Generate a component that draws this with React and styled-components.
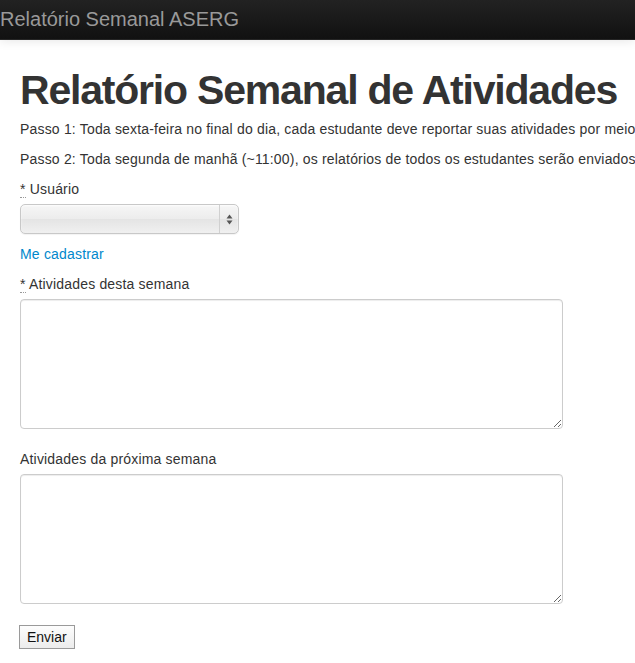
import styled, { createGlobalStyle } from "styled-components";

const GlobalStyle = createGlobalStyle`
  html, body {
    margin: 0;
    padding: 0;
    overflow-x: hidden;
    background: #fff;
  }
  body {
    font-family: "Liberation Sans", Arial, sans-serif;
    font-size: 14px;
    line-height: 20px;
    color: #333;
    letter-spacing: 0.18px;
  }
`

const Navbar = styled.div`
  height: 40px;
  background: linear-gradient(to bottom, #222, #111);
  border-bottom: 1px solid #252525;
  box-shadow: 0 1px 10px rgba(0, 0, 0, 0.1);
  box-sizing: border-box;
  overflow: hidden;
  white-space: nowrap;
`

const Brand = styled.a`
  display: block;
  padding: 9px 0 0 0;
  font-size: 20px;
  line-height: 20px;
  font-weight: 200;
  letter-spacing: 0;
  color: #999;
  text-decoration: none;
`

const Container = styled.div`
  width: 940px;
  padding: 0 20px;
`

const Title = styled.h1`
  margin: 28px 0 7px;
  font-size: 41px;
  line-height: 44px;
  font-weight: bold;
  color: #333;
  letter-spacing: -1.2px;
  white-space: nowrap;
`

const Step = styled.p`
  margin: 0 0 10px;
  white-space: nowrap;
`

const Form = styled.form`
  display: flex;
  flex-direction: column;
  align-items: flex-start;
  margin-top: 8px;
`

const Label = styled.label`
  display: block;
  margin-bottom: 5px;
`

const Required = styled.abbr`
  text-decoration: none;
  border-bottom: 1px dotted #999;
  cursor: help;
`

const SelectWrap = styled.div`
  position: relative;
  width: 219px;
  height: 30px;
  margin-bottom: 10px;
`

const Select = styled.select`
  appearance: none;
  width: 100%;
  height: 100%;
  border: 1px solid #c8c8c8;
  border-radius: 5px;
  background: linear-gradient(to bottom, #f6f6f6 0%, #ececec 50%, #e4e4e4 51%, #f0f0f0 100%);
  box-shadow: inset 0 1px 2px rgba(255, 255, 255, 0.8), 0 1px 1px rgba(0, 0, 0, 0.05);
  font: inherit;
`

const Arrows = styled.span`
  position: absolute;
  top: 1px;
  right: 1px;
  bottom: 1px;
  width: 18px;
  border-left: 1px solid #d0d0d0;
  display: flex;
  align-items: center;
  justify-content: center;
  pointer-events: none;
`

const Link = styled.a`
  display: block;
  margin: 0 0 10px;
  color: #0088cc;
  text-decoration: none;
`

const TextArea = styled.textarea`
  width: 543px;
  height: 130px;
  box-sizing: border-box;
  padding: 4px 6px;
  border: 1px solid #ccc;
  border-radius: 4px;
  box-shadow: inset 0 1px 1px rgba(0, 0, 0, 0.075);
  font: inherit;
  color: #555;
  margin-bottom: ${({ $gap }) => $gap}px;
`

const Submit = styled.button`
  height: 24px;
  padding: 0 7px;
  margin-left: -1px;
  border: 1px solid #9a9a9a;
  border-radius: 0;
  background: linear-gradient(to bottom, #fdfdfd, #ececec);
  font-family: "Liberation Sans", Arial, sans-serif;
  font-size: 14px;
  letter-spacing: 0;
  color: #111;
`

export default function App() {
  return (
    <>
      <GlobalStyle />
      <Navbar>
        <Brand href="#">Relatório Semanal ASERG</Brand>
      </Navbar>
      <Container>
        <Title>Relatório Semanal de Atividades</Title>
        <Step>Passo 1: Toda sexta-feira no final do dia, cada estudante deve reportar suas atividades por meio deste formulário.</Step>
        <Step>Passo 2: Toda segunda de manhã (~11:00), os relatórios de todos os estudantes serão enviados por e-mail.</Step>
        <Form onSubmit={(e) => e.preventDefault()}>
          <Label><Required title="required">*</Required> Usuário</Label>
          <SelectWrap>
            <Select defaultValue="">
              <option value=""></option>
            </Select>
            <Arrows>
              <svg width="7" height="11" viewBox="0 0 7 11">
                <path d="M3.5 0.5 L6.5 4.5 L0.5 4.5 Z" fill="#555" />
                <path d="M3.5 10.5 L6.5 6.5 L0.5 6.5 Z" fill="#555" />
              </svg>
            </Arrows>
          </SelectWrap>
          <Link href="#">Me cadastrar</Link>
          <Label><Required title="required">*</Required> Atividades desta semana</Label>
          <TextArea $gap={20} />
          <Label>Atividades da próxima semana</Label>
          <TextArea $gap={21} />
          <Submit type="submit">Enviar</Submit>
        </Form>
      </Container>
    </>
  );
}
